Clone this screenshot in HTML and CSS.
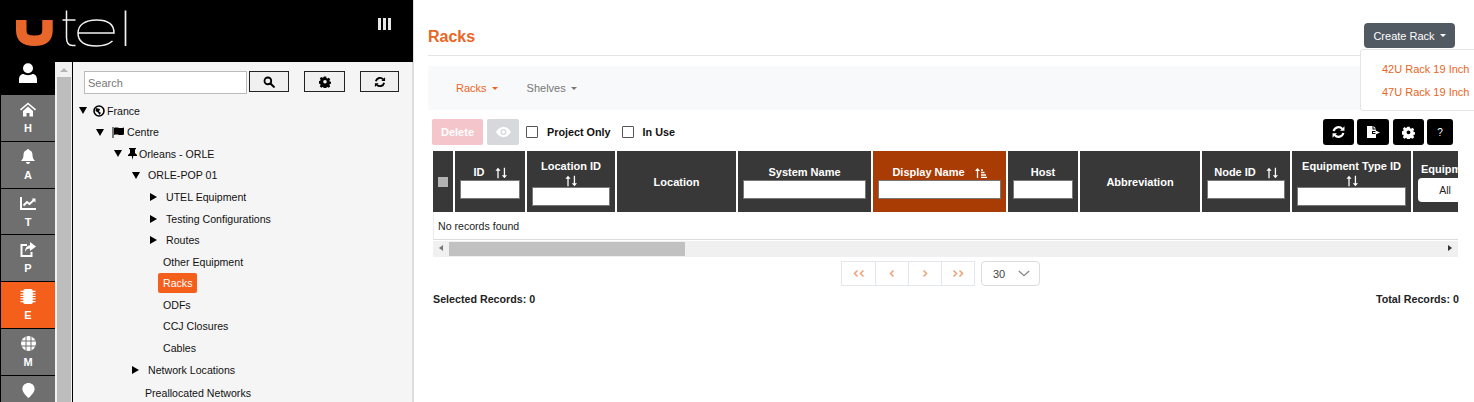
FILE: index.html
```html
<!DOCTYPE html>
<html lang="en">
<head>
<meta charset="utf-8">
<title>Racks</title>
<link rel="stylesheet" href="styles.css">
</head>
<body>
<svg width="0" height="0" class="defs">
  <symbol id="i-search" viewBox="0 0 16 16"><circle cx="6.5" cy="6.5" r="4.5" fill="none" stroke="currentColor" stroke-width="2.4"/><path d="M10 10l4.5 4.5" stroke="currentColor" stroke-width="2.8" stroke-linecap="round"/></symbol>
  <symbol id="i-cog" viewBox="0 0 16 16"><path fill-rule="evenodd" fill="currentColor" d="M6.5 1h3l.4 2 1.3.6 1.8-1.1 2 2.1-1.1 1.8.5 1.3 2 .4v2.8l-2 .4-.5 1.3 1.1 1.8-2 2-1.8-1-1.3.5-.4 2h-3l-.4-2-1.3-.5-1.8 1-2-2 1.1-1.8-.5-1.3-2-.4V7.100l2-.4.5-1.300-1.100-1.800 2-2.100 1.800 1.100 1.300-.6zM8 5.800a2.400 2.400 0 1 0 0 4.800 2.400 2.400 0 0 0 0-4.800z" transform="translate(0 -.2) scale(1 .97)"/></symbol>
  <symbol id="i-sync" viewBox="0 0 16 16"><path fill="none" stroke="currentColor" stroke-width="2.500" d="M2.500 7a5.600 5.600 0 0 1 9.800-2.500M13.500 9a5.600 5.600 0 0 1-9.800 2.500"/><path fill="currentColor" d="M14.800 1.500v5h-5zM1.200 14.500v-5h5z"/></symbol>
  <symbol id="i-sort" viewBox="0 0 14 12"><path fill="none" stroke="currentColor" stroke-width="1.500" d="M3.500 12V1.500M11 0v10.500"/><path fill="currentColor" d="M3.500 0L6.500 3.500H.5zM11 12L8 8.500h6z"/></symbol>
  <symbol id="i-chev-l" viewBox="0 0 8 10"><path fill="none" stroke="currentColor" stroke-width="2.200" d="M6 1L2 5l4 4"/></symbol>
  <symbol id="i-chev-r" viewBox="0 0 8 10"><path fill="none" stroke="currentColor" stroke-width="2.200" d="M2 1l4 4-4 4"/></symbol>
  <symbol id="i-down" viewBox="0 0 14 8"><path fill="none" stroke="currentColor" stroke-width="1.600" d="M1 1l6 5.500L13 1"/></symbol>
</svg>

<div class="app">
  <aside class="left">
    <header class="brand">
      <svg class="logo" width="125" height="40" viewBox="0 0 125 40" role="img" aria-label="utel">
        <path d="M6.250 10V20C6.250 28 11 30.750 19.400 30.750S32.500 28 32.500 20V10" fill="none" stroke="#e8662a" stroke-width="10.500"/>
        <path d="M51.500 .5v27c0 5.500 2 8 6 8h3M47.500 10h13" fill="none" stroke="#f2f2f2" stroke-width="1.500"/>
        <path d="M63 23h36c0-8.500-6-13-17.500-13S63 15 63 23s6 13 18.500 13c7 0 12-1.500 16-5" fill="none" stroke="#f2f2f2" stroke-width="1.500"/>
        <path d="M110.500 .5V36" fill="none" stroke="#f2f2f2" stroke-width="1.700"/>
      </svg>
      <div class="menu-bars"><i></i><i></i><i></i></div>
    </header>
    <div class="lower">
      <nav class="rail">
        <div class="user">
          <svg width="18" height="20" viewBox="0 0 18 20"><circle cx="9" cy="5.200" r="5" fill="#fff"/><path d="M0 20v-3.500c0-4 2.500-5.500 4.500-5.500 1 .7 2.800 1.200 4.500 1.200s3.500-.5 4.500-1.200c2 0 4.500 1.500 4.500 5.500V20z" fill="#fff"/></svg>
        </div>
        <a class="rail-item">
          <svg width="16" height="14" viewBox="0 0 16 14"><path fill="#fff" d="M8 0l8 6.800-1 1.100L8 2 1 7.900 0 6.800zM3 8.500L8 4l5 4.500V14H9.500v-3.500h-3V14H3z"/></svg><span>H</span>
        </a>
        <a class="rail-item">
          <svg width="14" height="15" viewBox="0 0 14 15"><path fill="#fff" d="M7 0c.7 0 1 .5 1 1 2.500.5 3.500 2.500 3.500 5 0 3 1 4.500 2.500 6H0c1.500-1.500 2.500-3 2.500-6C2.500 3.500 3.500 1.500 6 1c0-.5.3-1 1-1zM5 13h4c0 1-.8 2-2 2s-2-1-2-2z"/></svg><span>A</span>
        </a>
        <a class="rail-item">
          <svg width="16" height="13" viewBox="0 0 16 13"><path fill="#fff" d="M0 0h2v11h14v2H0z"/><path fill="none" stroke="#fff" stroke-width="2" d="M3.500 8.500L7 5l2.500 2L14 3"/><path fill="#fff" d="M11.500 1.500H15.500V5.500z"/></svg><span>T</span>
        </a>
        <a class="rail-item">
          <svg width="16" height="15" viewBox="0 0 16 15"><path fill="none" stroke="#fff" stroke-width="2" d="M7 3H1.500v11h10v-4"/><path fill="#fff" d="M10 0l6 4.500L10 9V6.500C7.500 6.500 6 7.500 5 10c0-4 2-6.500 5-6.800z"/></svg><span>P</span>
        </a>
        <a class="rail-item active">
          <svg width="16" height="16" viewBox="0 0 16 16"><rect x="3" y="0" width="10" height="16" rx="2" fill="#fff"/><path stroke="#fff" stroke-width="1.200" d="M0 2.500h16M0 5.500h16M0 8h16M0 10.500h16M0 13.500h16"/></svg><span>E</span>
        </a>
        <a class="rail-item">
          <svg width="15" height="15" viewBox="0 0 15 15"><circle cx="7.500" cy="7.500" r="7.500" fill="#fff"/><path fill="none" stroke="#6f6f6f" d="M0 5h15M0 10h15M5 0v15M10 0v15"/></svg><span>M</span>
        </a>
        <a class="rail-item">
          <svg width="13" height="16" viewBox="0 0 13 16"><path fill="#fff" d="M6.500 0C10 0 13 2.600 13 6c0 4-4 7.500-6.500 10C4 13.500 0 10 0 6c0-3.400 3-6 6.500-6z"/></svg>
        </a>
      </nav>
      <div class="scroll">
        <div class="scroll-up"></div>
        <div class="scroll-thumb"></div>
      </div>
      <section class="tree">
        <div class="tree-search">
          <input class="search-input" type="text" placeholder="Search">
          <button class="tool-btn b-search"><svg width="12" height="12"><use href="#i-search"/></svg></button>
          <button class="tool-btn b-cog"><svg width="12" height="12"><use href="#i-cog"/></svg></button>
          <button class="tool-btn b-sync"><svg width="12" height="12"><use href="#i-sync"/></svg></button>
        </div>
        <ul class="tree-list">
          <li class="l0 open"><svg class="globe" width="12" height="12" viewBox="0 0 12 12"><circle cx="6" cy="6" r="5" fill="none" stroke="#000" stroke-width="1.600"/><path d="M3 3l4 1-1 2.500 2 1.500-1.500 2L5 7.500 2.500 6z" fill="#000"/></svg>France</li>
          <li class="l1 open"><svg class="flag" width="13" height="11" viewBox="0 0 13 11"><path d="M.5 0h1v11h-1zM2 1c3-1.500 5 1 10-.5v7c-5 1.500-7-1-10 .5z" fill="#000"/></svg>Centre</li>
          <li class="l2 open"><svg class="pin" width="9" height="12" viewBox="0 0 9 12"><path d="M1 0h7v1L7 1.500V5l2 2v1H5.200L4.500 12 3.800 8H0V7l2-2V1.500L1 1z" fill="#000"/></svg>Orleans - ORLE</li>
          <li class="l3 open">ORLE-POP 01</li>
          <li class="l4 closed">UTEL Equipment</li>
          <li class="l4 closed">Testing Configurations</li>
          <li class="l4 closed">Routes</li>
          <li class="l5">Other Equipment</li>
          <li class="l5"><span class="current">Racks</span></li>
          <li class="l5">ODFs</li>
          <li class="l5">CCJ Closures</li>
          <li class="l5">Cables</li>
          <li class="l3 closed branch">Network Locations</li>
          <li class="l6 branch">Preallocated Networks</li>
        </ul>
      </section>
    </div>
  </aside>

  <main class="main">
    <div class="title-row">
      <h1>Racks</h1>
      <div class="create-wrap">
        <button class="create-btn">Create Rack<i class="caret"></i></button>
        <div class="create-menu">
          <a>42U Rack 19 Inch</a>
          <a>47U Rack 19 Inch</a>
        </div>
      </div>
    </div>
    <div class="subnav">
      <a class="on">Racks<i class="caret"></i></a>
      <a>Shelves<i class="caret"></i></a>
    </div>
    <div class="toolbar">
      <button class="btn-delete">Delete</button>
      <button class="btn-eye"><svg width="15" height="10" viewBox="0 0 15 10"><path fill="#fff" fill-rule="evenodd" d="M7.500 0C11 0 13.700 2.500 15 5c-1.300 2.500-4 5-7.500 5S1.300 7.500 0 5C1.300 2.500 4 0 7.500 0zm0 2a3 3 0 1 0 0 6 3 3 0 0 0 0-6z"/><circle cx="7.500" cy="5" r="1.700" fill="#fff"/></svg></button>
      <label class="check"><i class="box"></i>Project Only</label>
      <label class="check"><i class="box"></i>In Use</label>
      <div class="toolbar-right">
        <button class="black-btn"><svg width="15" height="14"><use href="#i-sync"/></svg></button>
        <button class="black-btn w32"><svg width="13" height="12" viewBox="0 0 13 12"><path fill="#fff" d="M0 0h5.500v3.500H9V5H5v3h4v4H0zM6.500 0L9 2.500H6.500zM8.500 4.500L13 6.500 8.500 8.500V7H6V6h2.500z"/></svg></button>
        <button class="black-btn w31"><svg width="13" height="13"><use href="#i-cog"/></svg></button>
        <button class="black-btn w26 q">?</button>
      </div>
    </div>

    <div class="grid-box">
      <div class="thead">
        <div class="th"><i class="head-check"></i></div>
        <div class="th"><div class="lab">ID<svg class="sort gap" width="12" height="12"><use href="#i-sort"/></svg></div><input class="filter"></div>
        <div class="th"><div class="lab stacked">Location ID<svg class="sort" width="12" height="12"><use href="#i-sort"/></svg></div><input class="filter"></div>
        <div class="th"><div class="lab">Location</div></div>
        <div class="th"><div class="lab">System Name</div><input class="filter"></div>
        <div class="th sorted"><div class="lab">Display Name<svg class="sort gap" width="12" height="10" viewBox="0 0 12 10"><path fill="none" stroke="#fff" stroke-width="1.300" d="M2.500 10V1M6 2h2M6 4.500h3.500M6 7h5M6 9.500h6"/><path fill="#fff" d="M2.500 0L5 3H0z"/></svg></div><input class="filter"></div>
        <div class="th"><div class="lab">Host</div><input class="filter"></div>
        <div class="th"><div class="lab">Abbreviation</div></div>
        <div class="th"><div class="lab">Node ID<svg class="sort gap" width="12" height="12"><use href="#i-sort"/></svg></div><input class="filter"></div>
        <div class="th"><div class="lab stacked">Equipment Type ID<svg class="sort" width="12" height="12"><use href="#i-sort"/></svg></div><input class="filter"></div>
        <div class="th clip"><div class="lab">Equipment Type</div><div class="all">All</div></div>
      </div>
      <div class="empty">No records found</div>
      <div class="hscroll">
        <i class="arr-l"></i>
        <div class="hthumb"></div>
        <i class="arr-r"></i>
      </div>
    </div>

    <div class="pager">
      <div class="pages">
        <a><svg width="6" height="9"><use href="#i-chev-l"/></svg><svg width="6" height="9"><use href="#i-chev-l"/></svg></a>
        <a><svg width="6" height="9"><use href="#i-chev-l"/></svg></a>
        <a><svg width="6" height="9"><use href="#i-chev-r"/></svg></a>
        <a><svg width="6" height="9"><use href="#i-chev-r"/></svg><svg width="6" height="9"><use href="#i-chev-r"/></svg></a>
      </div>
      <div class="size">30<svg width="12" height="7"><use href="#i-down"/></svg></div>
    </div>
    <div class="totals">
      <span>Selected Records: 0</span>
      <span>Total Records: 0</span>
    </div>
  </main>
</div>
</body>
</html>
```
FILE: styles.css
```css
* { box-sizing: border-box; }
html, body { margin: 0; height: 402px; overflow: hidden; background: #fff; }
body { font-family: "Liberation Sans", Arial, sans-serif; font-size: 11px; color: #212529; }
.defs { position: absolute; }
button { font-family: inherit; padding: 0; cursor: pointer; }
.app { display: flex; height: 402px; overflow: hidden; }

.left { width: 413px; flex: none; display: flex; flex-direction: column; }
.brand { height: 62px; background: #000; display: flex; align-items: flex-start; flex: none; }
.logo { margin: 10px 0 0 15px; flex: none; }
.menu-bars { display: flex; gap: 2px; margin: 18px 0 0 238px; }
.menu-bars i { width: 3px; height: 12px; background: #e8e8e8; display: block; }
.lower { display: flex; flex: 1; min-height: 0; }

.rail { width: 55px; flex: none; background: #000; display: flex; flex-direction: column; overflow: hidden; }
.user { height: 33px; flex: none; display: flex; justify-content: center; align-items: flex-start; padding-top: 1px; }
.rail-item { height: 45.8px; flex: none; margin: 0 0 1px 1px; background: #6f6f6f; color: #fff; font-weight: 700; font-size: 11px; display: flex; flex-direction: column; align-items: center; padding-top: 7px; gap: 5px; }
.rail-item svg { height: 15px; flex: none; }
.rail-item.active { background: #f4601c; }

.scroll { width: 18px; flex: none; background: #f1f1f1; border-right: 1px solid #000; padding: 0 1px 0 2px; }
.scroll-up { width: 0; height: 0; margin: 6px auto 5px; border: 4px solid transparent; border-top: 0; border-bottom: 4px solid #b5b5b5; }
.scroll-thumb { height: 330px; background: #bdbdbd; }

.tree { flex: 1; background: #f5f5f5; min-width: 0; padding: 9px 0 0 11px; border-right: 1px solid #ddd; }
.tree-search { display: flex; align-items: flex-start; }
.search-input { width: 163px; height: 23px; border: 1px solid #bbb; background: #fff; padding: 0 3px; font: 11px "Liberation Sans", Arial, sans-serif; }
.search-input::placeholder { color: #777; }
.tool-btn { height: 21px; border: 1px solid #222; background: #f0f0f0; color: #000; display: flex; align-items: center; justify-content: center; }
.b-search { width: 40px; margin-left: 2px; }
.b-cog { width: 41px; margin-left: 15px; }
.b-sync { width: 39px; margin-left: 15px; }

.tree-list { list-style: none; margin: 6px 0 0; padding: 0; color: #111; font-size: 10.6px; }
.tree-list li { height: 21.55px; display: flex; align-items: center; position: relative; white-space: nowrap; }
.tree-list li.branch { margin-top: 1px; }
.tree-list li.open::before, .tree-list li.closed::before { content: ""; position: absolute; width: 0; height: 0; }
.tree-list li.open::before { border-left: 4px solid transparent; border-right: 4px solid transparent; border-top: 7px solid #000; margin-left: -19px; }
.tree-list li.closed::before { border-top: 4px solid transparent; border-bottom: 4px solid transparent; border-left: 7px solid #000; margin-left: -18px; }
.l0 { padding-left: 9px; }
.l0::before { left: 14px; }
.l1 { padding-left: 28px; }
.l1::before { left: 31px; }
.l2 { padding-left: 44px; }
.l2::before { left: 49px; }
.l3 { padding-left: 64px; }
.l3::before { left: 67px; }
.l3.closed::before { left: 66px; }
.l4 { padding-left: 82px; }
.l4::before { left: 84px; }
.l5 { padding-left: 79px; }
.l6 { padding-left: 61px; }
.globe, .flag, .pin { margin-right: 2px; flex: none; }
.current { background: #f4601c; color: #fff; font-weight: 400; padding: 2px 5px; border-radius: 2px; margin-left: -5px; line-height: 16px; }

.main { flex: 1; min-width: 0; border-left: 1px solid #ddd; padding: 0 16px 0 14px; display: flex; flex-direction: column; position: relative; }
.title-row { height: 56px; border-bottom: 1px solid #e5e5e5; display: flex; justify-content: space-between; margin-right: -3px; flex: none; }
h1 { margin: 27px 0 0; font-size: 16px; line-height: 20px; font-weight: 700; color: #e8661f; }
.create-wrap { position: relative; margin-right: 6px; padding-top: 23px; }
.create-btn { width: 91px; height: 25px; background: #515a62; border: 0; border-radius: 4px; color: #fff; font-size: 11px; display: flex; align-items: center; justify-content: center; }
.caret { display: block; width: 0; height: 0; border-left: 3px solid transparent; border-right: 3px solid transparent; border-top: 3px solid currentColor; margin-left: 5px; flex: none; }
.create-menu { position: absolute; left: -4px; top: 49px; width: 125px; height: 62px; background: #fff; border: 1px solid #e4e4e4; border-radius: 3px; padding: 8px 0 0 21px; color: #e8661f; font-size: 11px; z-index: 5; }
.create-menu a { display: block; height: 23px; line-height: 23px; white-space: nowrap; }

.subnav { margin-top: 10px; height: 44px; background: #f8f9fa; display: flex; align-items: center; padding-left: 28px; gap: 29px; color: #777; font-size: 11px; flex: none; }
.subnav a { display: flex; align-items: center; }
.subnav .on { color: #e8661f; }

.toolbar { display: flex; align-items: center; height: 26px; margin: 9px 5px 0 4px; flex: none; }
.btn-delete { width: 51px; height: 26px; border: 0; border-radius: 2px; background: #f4c6cb; color: #fff; font-size: 11px; font-weight: 700; }
.btn-eye { width: 32px; height: 26px; margin-left: 4px; border: 0; border-radius: 2px; background: #d6d8db; display: flex; align-items: center; justify-content: center; }
.check { display: flex; align-items: center; font-weight: 700; font-size: 10.8px; color: #111; margin-left: 7px; }
.check + .check { margin-left: 11px; }
.box { width: 12px; height: 12px; border: 1px solid #555; border-radius: 1px; background: #fff; margin-right: 9px; display: block; }
.toolbar-right { margin-left: auto; display: flex; gap: 3px; }
.black-btn { width: 31px; height: 26px; background: #000; color: #fff; border: 0; border-radius: 3px; display: flex; align-items: center; justify-content: center; }
.black-btn.w32 { width: 32px; }
.black-btn.w31 { margin-left: 1px; }
.black-btn.w26 { width: 26px; }
.q { font-size: 10px; }

.grid-box { margin-top: 6px; margin-left: 5px; width: 1025px; flex: none; }
.thead { display: grid; grid-template-columns: 20px 70px 88px 119px 133px 133px 70px 120px 88px 119px 120px; gap: 2px; height: 61px; overflow: hidden; }
.th { background: #383838; color: #fff; font-weight: 700; font-size: 11px; display: flex; flex-direction: column; align-items: center; justify-content: center; text-align: center; min-width: 0; padding-top: 1px; }
.th.sorted { background: #a83c04; }
.head-check { width: 10px; height: 10px; background: #b3b3b3; display: block; }
.lab { line-height: 15px; display: flex; align-items: center; justify-content: center; white-space: nowrap; }
.lab.stacked { flex-direction: column; }
.lab.stacked .sort { margin-top: 1px; }
.sort { color: #fff; flex: none; }
.sort.gap { margin-left: 10px; }
.filter { height: 19px; width: calc(100% - 10px); border: 1px solid #777; background: #fff; display: block; padding: 0; flex: none; }
.th.clip { align-items: flex-start; padding-left: 5px; overflow: hidden; }
.th.clip .lab { margin-left: 3px; }
.all { width: 54px; height: 24px; margin-top: 1px; background: #fff; border-radius: 4px; color: #222; font-weight: 400; line-height: 24px; text-align: center; font-size: 10.5px; flex: none; }
.empty { height: 28px; line-height: 29px; padding-left: 4px; color: #222; border-bottom: 1px solid #ddd; border-left: 1px solid #eee; font-size: 10.6px; }
.hscroll { height: 16px; margin-top: 1px; background: #f0f0f0; display: flex; align-items: center; position: relative; }
.arr-l, .arr-r { width: 0; height: 0; border-top: 3.5px solid transparent; border-bottom: 3.5px solid transparent; position: absolute; top: 4px; }
.arr-l { left: 6px; border-right: 4px solid #777; }
.arr-r { right: 6px; border-left: 4px solid #333; }
.hthumb { width: 236px; height: 14px; margin-left: 16px; background: #c1c1c1; }

.pager { display: flex; justify-content: center; align-items: flex-start; gap: 6px; margin: 4px 0 0 -5px; flex: none; }
.pages { display: flex; height: 25px; border: 1px solid #e3e6ea; }
.pages a { width: 33px; height: 23px; display: flex; align-items: center; justify-content: center; color: #eea67c; border-left: 1px solid #e3e6ea; }
.pages a:first-child { border-left: 0; }
.size { width: 59px; height: 25px; border: 1px solid #dcdcdc; border-radius: 4px; display: flex; align-items: center; color: #444; font-size: 11px; padding-left: 11px; gap: 13px; }
.size svg { color: #888; }

.totals { display: flex; justify-content: space-between; margin: 7px -1px 0 5px; font-weight: 700; font-size: 10.7px; color: #222; line-height: 12px; flex: none; }
```
